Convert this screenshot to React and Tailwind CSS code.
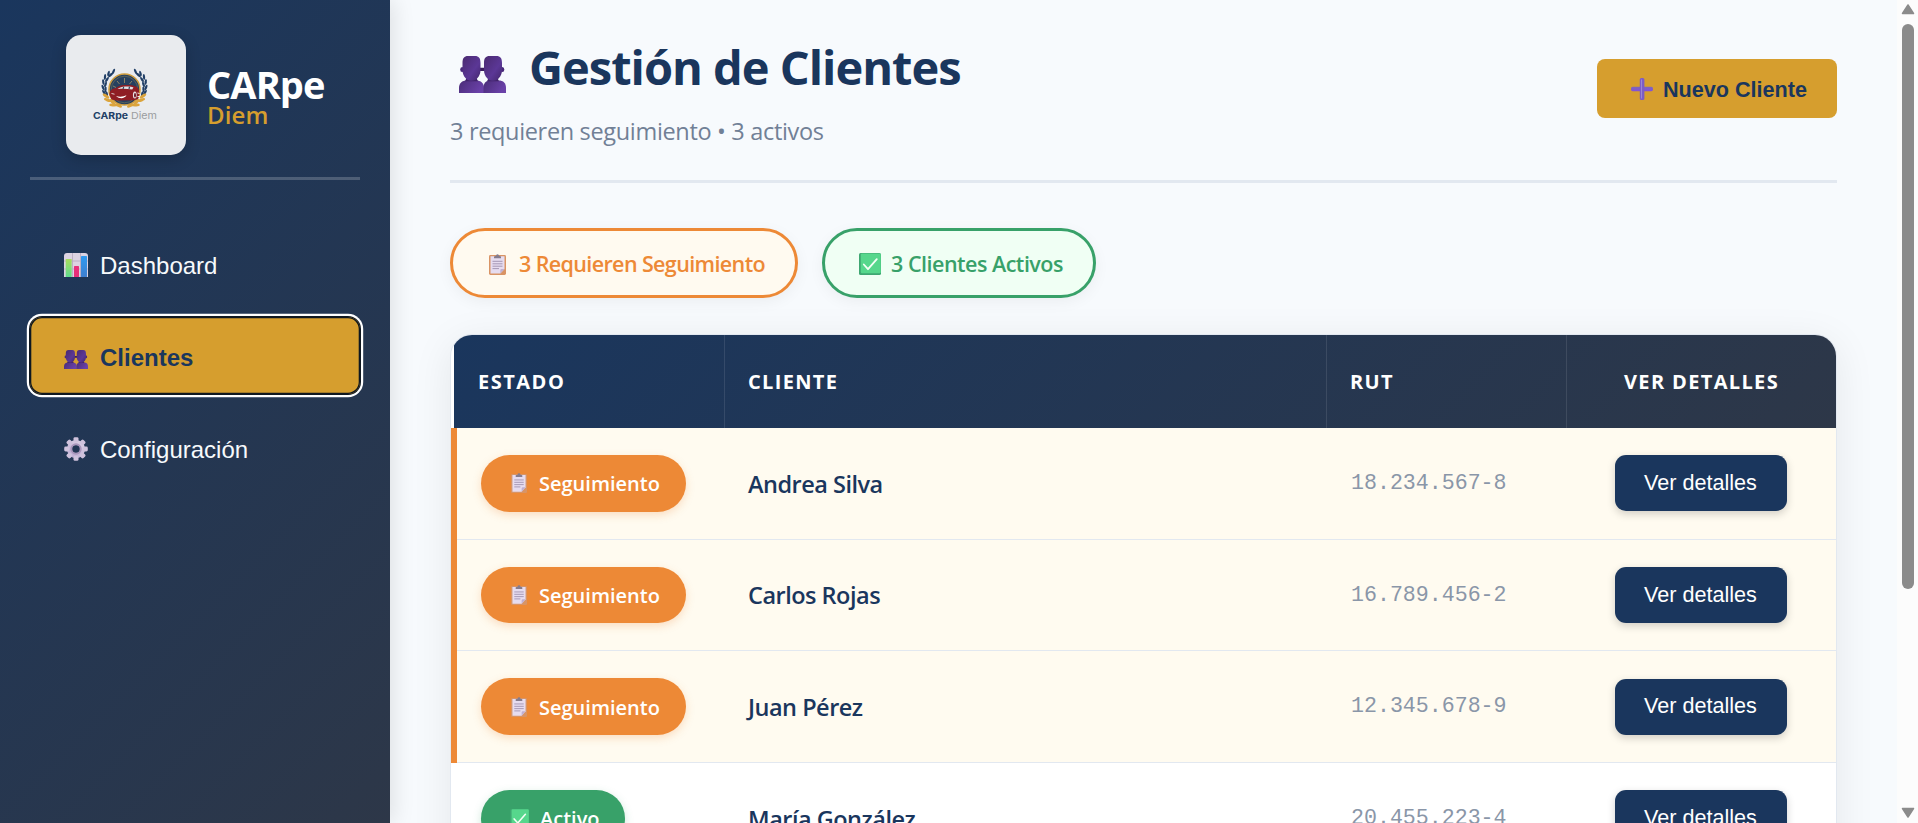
import React from "react";

function UsersIcon({ className, id }) {
  return (
    <svg className={className} viewBox="0 0 47 37" aria-hidden="true">
      <defs>
        <linearGradient id={`${id}h`} x1="0" y1="0" x2="1" y2="1">
          <stop offset="0" stopColor="#4a2a70" />
          <stop offset="0.600" stopColor="#5b3796" />
          <stop offset="1" stopColor="#43266d" />
        </linearGradient>
        <linearGradient id={`${id}b`} x1="0" y1="0" x2="1" y2="0.4">
          <stop offset="0" stopColor="#4a2c78" />
          <stop offset="1" stopColor="#6a41a8" />
        </linearGradient>
      </defs>
      <path d="M0 37v-5c0-5 3-7.500 8-7.500h9c5 0 8 2.500 8 7.500v5z" fill={`url(#${id}b)`} />
      <path d="M24.500 37v-6.500c.5-4 3-6 7-6h8c5 0 7.500 2.500 7.500 7.500v5z" fill={`url(#${id}b)`} />
      <path d="M7.500 22h10l1.500 3.200H6zM29.500 22h9l1.500 3.200H28z" fill="#40236a" />
      <ellipse cx="3.200" cy="13.500" rx="2" ry="2.600" fill="#48297a" />
      <ellipse cx="43.300" cy="13.500" rx="2" ry="2.600" fill="#48297a" />
      <rect x="20" y="11.800" width="6.500" height="3.200" rx="1.200" fill="#3a1d5c" />
      <path d="M3.500 7c0-5 1.700-7 5.500-7h7c3.800 0 5.500 2 5.500 7v7c0 3.500-1.200 6-3 8-1.500 1.700-3 2.700-6 2.700s-4.500-1-6-2.700c-1.800-2-3-4.500-3-8z" fill={`url(#${id}h)`} />
      <path d="M25 7c0-5 1.700-7 5.500-7h7C41.300 0 43 2 43 7v7c0 3.500-1.200 6-3 8-1.500 1.700-3 2.700-6 2.700s-4.500-1-6-2.700c-1.800-2-3-4.500-3-8z" fill={`url(#${id}h)`} />
    </svg>
  );
}

function ChartIcon() {
  return (
    <svg className="size-6 shrink-0" viewBox="0 0 24 24" aria-hidden="true">
      <defs>
        <linearGradient id="cg" x1="0" y1="0" x2="0" y2="1">
          <stop offset="0" stopColor="#a8dc5c" />
          <stop offset="1" stopColor="#5fdc8e" />
        </linearGradient>
        <linearGradient id="cb" x1="0" y1="0" x2="0" y2="1">
          <stop offset="0" stopColor="#2f9af0" />
          <stop offset="1" stopColor="#3f7fd0" />
        </linearGradient>
      </defs>
      <path d="M0 24V3a3 3 0 0 1 3-3h18a3 3 0 0 1 3 3v21z" fill="#dcd3e2" />
      <path d="M0 8h24M0 16h24M8.500 0v24M16.500 0v24" stroke="#b9adc2" strokeWidth="0.900" />
      <rect x="1.700" y="6" width="6" height="18" rx="0.600" fill="url(#cg)" />
      <rect x="10" y="13" width="5" height="11" rx="0.600" fill="#e8307a" />
      <rect x="17" y="3" width="6" height="21" rx="0.600" fill="url(#cb)" />
    </svg>
  );
}

const TEETH = [0, 45, 90, 135, 180, 225, 270, 315];

function GearIcon() {
  return (
    <svg className="size-6 shrink-0" viewBox="0 0 24 24" aria-hidden="true">
      <defs>
        <linearGradient id="gg" gradientUnits="userSpaceOnUse" x1="18" y1="2" x2="6" y2="22">
          <stop offset="0" stopColor="#e0d5e6" />
          <stop offset="1" stopColor="#b9a7d2" />
        </linearGradient>
      </defs>
      <circle cx="12" cy="12" r="6.600" fill="none" stroke="url(#gg)" strokeWidth="5" />
      {TEETH.map((a) => (
        <rect key={a} x="9.500" y="0.200" width="5" height="5" rx="1.400" fill="#cfc2dc" transform={`rotate(${a} 12 12)`} />
      ))}
      <circle cx="12" cy="12" r="4.700" fill="none" stroke="#a996bb" strokeWidth="2" />
    </svg>
  );
}

function ClipboardIcon({ className }) {
  return (
    <svg className={className} viewBox="0 0 17 21" preserveAspectRatio="none" aria-hidden="true">
      <rect x="0" y="1" width="17" height="20" rx="1.400" fill="#d99465" />
      <path d="M1.500 2.200h14V15l-4.200 4.600H1.500z" fill="#e6dcf0" />
      <path d="M11.300 19.600V16.200a1.200 1.200 0 0 1 1.200-1.200h3z" fill="#c0b0d2" />
      <path d="M5 4.300V2.400L7 1.800a1.500 1.500 0 0 1 3 0l2 .6v1.900z" fill="#857c8e" />
      <path d="M3.500 7.300h10M3.500 9.800h10M3.500 12.200h10M3.500 14.600h6.500" stroke="#9d8fae" strokeWidth="0.900" />
    </svg>
  );
}

function CheckIcon({ className }) {
  return (
    <svg className={className} viewBox="0 0 22 22" aria-hidden="true">
      <rect width="22" height="22" rx="1.600" fill="#3fa772" />
      <rect x="1.800" y="0.400" width="20" height="19.800" rx="1.200" fill="#56d78c" />
      <path d="M4.800 11.500l4.200 4.700L17.800 6.200" fill="none" stroke="#f4fff6" strokeWidth="1.800" strokeLinecap="round" strokeLinejoin="round" />
    </svg>
  );
}

function PlusIcon() {
  return (
    <svg className="size-[22px] shrink-0" viewBox="0 0 22 22" aria-hidden="true">
      <defs>
        <linearGradient id="pg" x1="0" y1="0" x2="0" y2="1">
          <stop offset="0" stopColor="#7d68b8" />
          <stop offset="1" stopColor="#8350dc" />
        </linearGradient>
      </defs>
      <rect x="0" y="8.800" width="22" height="4.400" rx="1.600" fill="url(#pg)" />
      <rect x="8.800" y="0" width="4.600" height="22" rx="1.600" fill="#7c5cc6" />
      <path d="M10.500 1.500v19" stroke="#9b84d6" strokeWidth="1.100" />
    </svg>
  );
}

const LEAVES = [
  [44.500, 40, 50], [41, 44.500, 35], [39.500, 49.500, 20], [39.500, 54.500, 5], [40.800, 59, -10],
  [47.500, 36.500, 25], [42.500, 38.500, 15], [39, 42, 5], [37.300, 47, -8], [37, 52.500, -22], [38, 57.500, -35],
];
const GOLD_LEAVES = [
  [40, 61, -55], [41.500, 65, -68], [46.500, 67, -45], [47, 70, -85], [52.500, 70.500, -65],
];

function LaurelSide() {
  return (
    <g>
      {LEAVES.map(([x, y, r]) => (
        <ellipse key={`${x}${y}`} cx={x} cy={y} rx="1.150" ry="2.900" transform={`rotate(${r} ${x} ${y})`} fill="#213f66" />
      ))}
      {GOLD_LEAVES.map(([x, y, r]) => (
        <ellipse key={`${x}${y}`} cx={x} cy={y} rx="1.500" ry="3.800" transform={`rotate(${r} ${x} ${y})`} fill="#dba43c" />
      ))}
    </g>
  );
}

function BrandLogo() {
  return (
    <svg className="size-[120px]" viewBox="0 0 120 120" role="img" aria-label="CARpe Diem">
      <LaurelSide />
      <g transform="translate(117 0) scale(-1 1)">
        <LaurelSide />
      </g>
      <circle cx="58.500" cy="54.500" r="15.500" fill="#26405f" />
      <circle cx="58.500" cy="54.500" r="15.500" fill="none" stroke="#cf9d3d" strokeWidth="1.600" />
      <circle cx="58.500" cy="54.500" r="13.300" fill="none" stroke="#8b8257" strokeWidth="0.500" />
      <path d="M58.500 43v5M51 46l2.500 3M66 46l-2.500 3M47 51l3 1.500" stroke="#a3936a" strokeWidth="0.800" />
      <path d="M43.500 60c-.3-3.500 1.500-6 6-6.700 2.500-2 5-3 9-3.200 6-.3 10 .3 12.500 2 1.800 1.300 2.400 4 2.300 8l-1.300 4.200-5 1-16 .2-5.500-1z" fill="#8f1d24" />
      <path d="M51.500 54c2-1.500 4.500-2.300 7.500-2.500 4-.3 6.500 0 8.500 1l-1.300 2c-5-1-10-1-14.700-.5z" fill="#dfe3e8" />
      <path d="M57 54l.7-2.100M63 54l.5-2.300" stroke="#31455c" strokeWidth="1.200" />
      <path d="M50 61c3.500 1.200 7 1 10.500-.7-1.500 3-6.500 4.200-10.500.7z" fill="#fff" />
      <path d="M45.500 58.500l3 .7" stroke="#e7dfe0" strokeWidth="0.900" />
      <ellipse cx="68.800" cy="60" rx="1.900" ry="3.600" fill="#e7dfe0" />
      <ellipse cx="69" cy="60.300" rx="1" ry="2.200" fill="#6e1c28" />
      <path d="M71.500 58l2 .5M71.500 61.500h2.200" stroke="#fff" strokeWidth="0.900" />
      <text x="27" y="84.300" fontSize="9.400" fontFamily="Inter, sans-serif" fontWeight="700" fill="#213f66" textLength="35" lengthAdjust="spacingAndGlyphs">CARpe</text>
      <text x="65" y="84.300" fontSize="9.400" fontFamily="Inter, sans-serif" fontWeight="400" fill="#9b9da0" textLength="26" lengthAdjust="spacingAndGlyphs">Diem</text>
    </svg>
  );
}

const NAV = [
  { label: "Dashboard", icon: <ChartIcon /> },
  { label: "Clientes", icon: <UsersIcon id="nu" className="mt-[5px] h-[19px] w-6 shrink-0" />, active: true },
  { label: "Configuración", icon: <GearIcon /> },
];

function Sidebar() {
  return (
    <aside className="z-10 flex w-[390px] shrink-0 flex-col bg-[linear-gradient(135deg,#1a365d_0%,#2d3748_100%)] px-[30px] pt-[35px] shadow-[4px_0_20px_rgba(0,0,0,0.1)]">
      <div className="flex gap-[21px] border-b-[3px] border-white/20 pb-[22px] pl-9">
        <div className="size-[120px] shrink-0 rounded-[15px] bg-[#e9ebee] shadow-[0_4px_15px_rgba(0,0,0,0.2)]">
          <BrandLogo />
        </div>
        <div className="flex flex-col pt-8">
          <span className="text-[38px] leading-[34px] font-bold tracking-[-0.900px] text-white">CARpe</span>
          <span className="text-[24px] leading-[28px] font-semibold tracking-[0.100px] text-[#d69e2e]">Diem</span>
        </div>
      </div>
      <nav className="mt-[45px] flex flex-col gap-[15px] font-['Liberation_Sans',Arial,sans-serif]">
        {NAV.map((item) => (
          <button
            key={item.label}
            className={
              item.active
                ? "flex h-[77px] items-center gap-3 rounded-xl bg-[#d69e2e] pt-[3px] pl-[34px] text-2xl font-bold text-[#1a365d] shadow-[inset_0_0_0_1.300px_#101820,0_0_0_1px_#101820,0_0_0_3.200px_#fff]"
                : "flex h-[77px] items-center gap-3 rounded-xl pt-[3px] pl-[34px] text-2xl text-[#f7fafc]"
            }
          >
            {item.icon}
            <span className="pt-0.5">{item.label}</span>
          </button>
        ))}
      </nav>
    </aside>
  );
}

const CLIENTS = [
  { name: "Andrea Silva", rut: "18.234.567-8", follow: true },
  { name: "Carlos Rojas", rut: "16.789.456-2", follow: true },
  { name: "Juan Pérez", rut: "12.345.678-9", follow: true },
  { name: "María González", rut: "20.455.223-4", follow: false },
];

function StatusBadge({ follow }) {
  return follow ? (
    <span className="flex h-[56.670px] w-[205px] items-center rounded-full bg-[#ed8936] pl-[30px] text-[20px] font-semibold text-white shadow-[0_3px_8px_rgba(237,137,54,0.25)]">
      <ClipboardIcon className="mr-3 h-5 w-4 shrink-0" />
      <span className="pt-0.5">Seguimiento</span>
    </span>
  ) : (
    <span className="flex h-[56.670px] w-[144px] items-center rounded-full bg-[#38a169] pl-[29px] text-[20px] font-semibold text-white shadow-[0_3px_8px_rgba(56,161,105,0.25)]">
      <CheckIcon className="mr-[11px] size-[19px] shrink-0" />
      <span className="pt-0.5">Activo</span>
    </span>
  );
}

function ClientRow({ client }) {
  return (
    <div
      className={
        client.follow
          ? "grid h-[111.670px] grid-cols-[274px_602px_240px_269px] items-stretch bg-[#fffbf0]"
          : "grid h-[111.670px] grid-cols-[274px_602px_240px_269px] items-stretch bg-white"
      }
    >
      <div
        className={
          client.follow
            ? "flex border-l-[6px] border-[#ed8936]"
            : "flex border-l-[6px] border-transparent"
        }
      >
        <div className="flex flex-1 items-center border-b border-[#e2e8f0] pl-6">
          <StatusBadge follow={client.follow} />
        </div>
      </div>
      <div className="flex items-center border-b border-[#e2e8f0] pt-0.5 pl-[23px] text-[23.500px] font-semibold tracking-[-0.500px] text-[#1a365d]">
        {client.name}
      </div>
      <div className="flex items-center border-b border-[#e2e8f0] pl-6 font-['Liberation_Mono','Courier_New',monospace] text-[21.600px] text-[#8a96a8]">
        {client.rut}
      </div>
      <div className="flex items-center justify-center border-b border-[#e2e8f0] pr-0.5">
        <button className="h-14 w-[172px] rounded-[11px] bg-[#1a365d] font-['Liberation_Sans',Arial,sans-serif] text-[21.600px] text-white shadow-[0_3px_8px_rgba(0,0,0,0.18)]">
          Ver detalles
        </button>
      </div>
    </div>
  );
}

function ClientTable() {
  return (
    <section className="mt-9 shrink-0 overflow-hidden rounded-[22px] border border-[#e2e8f0] bg-white shadow-[0_8px_40px_rgba(0,0,0,0.08)]">
      <div className="ml-[3px] grid h-[93px] grid-cols-[271px_602px_240px_269px] bg-[linear-gradient(135deg,#1a365d_0%,#2d3748_100%)] text-[20px] font-bold tracking-[1.350px] text-white">
        <div className="flex items-center border-r border-white/10 pl-6 tracking-[1.500px]">ESTADO</div>
        <div className="flex items-center border-r border-white/10 pl-[23px]">CLIENTE</div>
        <div className="flex items-center border-r border-white/10 pl-[23px]">RUT</div>
        <div className="flex items-center justify-center">VER DETALLES</div>
      </div>
      {CLIENTS.map((c) => (
        <ClientRow key={c.rut} client={c} />
      ))}
    </section>
  );
}

function Scrollbar() {
  return (
    <div className="flex w-[21px] shrink-0 flex-col items-center bg-[#fcfcfc] pt-[3px] pb-1">
      <svg className="h-3 w-[14px] shrink-0" viewBox="0 0 14 12" aria-hidden="true">
        <path d="M7 2L12.500 10.500H1.500z" fill="#8b8b8b" stroke="#8b8b8b" strokeWidth="1.500" strokeLinejoin="round" />
      </svg>
      <div className="mt-[9px] h-[565px] w-3 rounded-full bg-[#8b8b8b]" />
      <svg className="mt-auto h-3 w-[14px] shrink-0" viewBox="0 0 14 12" aria-hidden="true">
        <path d="M7 10L12.500 1.500H1.500z" fill="#8b8b8b" stroke="#8b8b8b" strokeWidth="1.500" strokeLinejoin="round" />
      </svg>
    </div>
  );
}

export default function App() {
  return (
    <div className="flex h-[823px] w-full overflow-hidden bg-[#f7fafd] font-['Open_Sans','Noto_Sans',sans-serif]">
      <Sidebar />
      <main className="flex min-w-0 flex-1 flex-col overflow-hidden px-[60px] pt-9">
        <header className="flex shrink-0 items-start justify-between border-b-[3px] border-[#e2e8f0] pb-[33px]">
          <div>
            <h1 className="flex h-[60px] items-center text-[47px] leading-[60px] font-bold tracking-[-1px] text-[#1a365d]">
              <UsersIcon id="tu" className="mt-[16px] mr-[23px] ml-[9px] h-[37px] w-[47px] shrink-0" />
              <span className="pt-0.5">Gestión de Clientes</span>
            </h1>
            <p className="mt-[19px] text-[23.500px] leading-[32px] tracking-[-0.330px] text-[#718096]">
              3 requieren seguimiento • 3 activos
            </p>
          </div>
          <button className="mt-[23px] flex h-[59px] w-[240px] items-center gap-[10px] rounded-lg bg-[#d69e2e] pl-[34px] font-['Liberation_Sans',Arial,sans-serif] text-[21.600px] font-bold text-[#1a365d]">
            <PlusIcon />
            <span className="pt-[3px]">Nuevo Cliente</span>
          </button>
        </header>
        <div className="mt-[45px] flex shrink-0 gap-6">
          <div className="flex h-[70px] w-[348px] items-center rounded-full border-[3px] border-[#ed8936] bg-[#fffaf0] pl-9 text-[21.500px] font-semibold tracking-[-0.620px] text-[#ed8936] shadow-[0_4px_15px_rgba(0,0,0,0.05)]">
            <ClipboardIcon className="mt-[3px] mr-[13px] h-[21px] w-[17px] shrink-0" />
            <span className="pt-[3px]">3 Requieren Seguimiento</span>
          </div>
          <div className="flex h-[70px] w-[274px] items-center rounded-full border-[3px] border-[#38a169] bg-[#f0fff4] pl-[34px] text-[21.500px] font-semibold tracking-[-0.500px] text-[#38a169] shadow-[0_4px_15px_rgba(0,0,0,0.05)]">
            <CheckIcon className="mt-[2px] mr-[10px] size-[22px] shrink-0" />
            <span className="pt-[3px]">3 Clientes Activos</span>
          </div>
        </div>
        <ClientTable />
      </main>
      <Scrollbar />
    </div>
  );
}
